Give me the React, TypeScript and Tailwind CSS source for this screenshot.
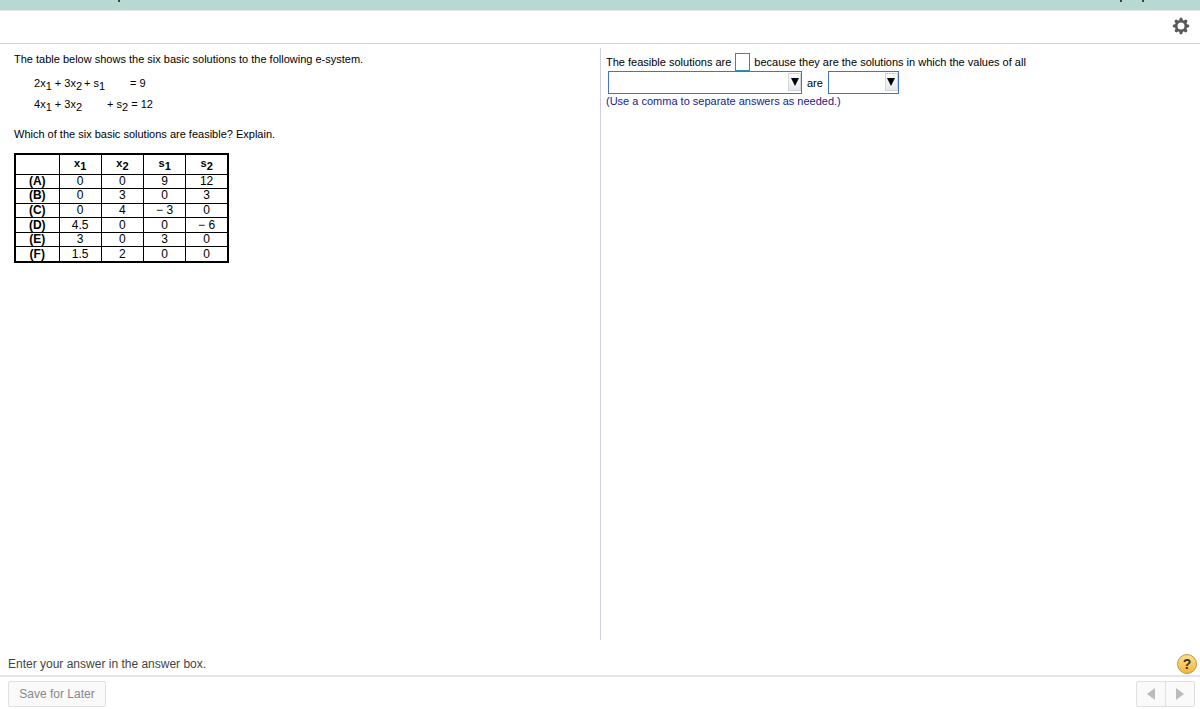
const columns = [
  { name: 'x', sub: '1' },
  { name: 'x', sub: '2' },
  { name: 's', sub: '1' },
  { name: 's', sub: '2' },
];

const solutions = [
  { label: '(A)', values: ['0', '0', '9', '12'] },
  { label: '(B)', values: ['0', '3', '0', '3'] },
  { label: '(C)', values: ['0', '4', '− 3', '0'] },
  { label: '(D)', values: ['4.5', '0', '0', '− 6'] },
  { label: '(E)', values: ['3', '0', '3', '0'] },
  { label: '(F)', values: ['1.5', '2', '0', '0'] },
];

const teeth = [0, 45, 90, 135, 180, 225, 270, 315];

function GearIcon() {
  return (
    <svg width="18" height="18" viewBox="0 0 18 18">
      <circle cx="9" cy="9" r="4.8" fill="none" stroke="#58595b" strokeWidth="2.6" />
      {teeth.map((angle) => (
        <path
          key={angle}
          d="M7 4L7.7 1.2Q9 0 10.3 1.2L11 4z"
          fill="#58595b"
          transform={`rotate(${angle} 9 9)`}
        />
      ))}
    </svg>
  );
}

function Var({ name, sub }: { name: string; sub: string }) {
  return (
    <>
      {name}
      <sub className="text-[11px] leading-none">{sub}</sub>
    </>
  );
}

function Dropdown({ label, className }: { label: string; className: string }) {
  return (
    <div className={`relative h-[23px] ${className}`}>
      <select
        aria-label={label}
        className="block h-full w-full appearance-none border border-[#4472c4] bg-white"
      />
      <span className="pointer-events-none absolute top-0.5 right-px flex h-[18px] w-[13px] justify-center border border-gray-300 bg-linear-to-b from-white to-gray-200 pt-1">
        <svg width="8" height="8" viewBox="0 0 8 8">
          <path d="M0 0h8L4 8z" fill="#000" />
        </svg>
      </span>
    </div>
  );
}

function Question() {
  return (
    <section className="w-1/2 px-3.5 pt-1">
      <p>The table below shows the six basic solutions to the following e-system.</p>
      <div className="mt-[7px] ml-5 grid auto-rows-[21px] grid-cols-[50px_23px_auto] justify-start leading-[21px]">
        <div className="whitespace-nowrap">
          2<Var name="x" sub="1" /> + 3<Var name="x" sub="2" />
        </div>
        <div className="whitespace-nowrap">
          + <Var name="s" sub="1" />
        </div>
        <div className="pl-[23px]">= 9</div>
        <div className="whitespace-nowrap">
          4<Var name="x" sub="1" /> + 3<Var name="x" sub="2" />
        </div>
        <div />
        <div>
          + <Var name="s" sub="2" /> = 12
        </div>
      </div>
      <p className="mt-3">Which of the six basic solutions are feasible? Explain.</p>
      <table className="mt-3 h-[110px] w-[215px] table-fixed border-collapse border-2 border-black text-center text-xs leading-[13px]">
        <thead>
          <tr className="h-5 text-[11px]">
            <th aria-label="Solution" className="w-11 border border-black" />
            {columns.map((column) => (
              <th key={column.name + column.sub} className="border border-black pb-0.5">
                <Var name={column.name} sub={column.sub} />
              </th>
            ))}
          </tr>
        </thead>
        <tbody>
          {solutions.map((row) => (
            <tr key={row.label}>
              <th className="border border-black">{row.label}</th>
              {row.values.map((value, i) => (
                <td key={i} className="border border-black">
                  {value}
                </td>
              ))}
            </tr>
          ))}
        </tbody>
      </table>
    </section>
  );
}

function Answer() {
  return (
    <section className="w-1/2 border-l border-[#d0d0e0] pt-[5px] pl-[5px]">
      <div className="flex h-[18px] items-center gap-1">
        <label htmlFor="feasible">The feasible solutions are</label>
        <input
          id="feasible"
          type="text"
          className="h-[18px] w-[15px] border border-[#2b8fa8] bg-white"
        />
        <span>because they are the solutions in which the values of all</span>
      </div>
      <div className="ml-0.5 flex items-center gap-[5px]">
        <Dropdown label="Values" className="w-[194px]" />
        <span>are</span>
        <Dropdown label="Condition" className="w-[71px]" />
      </div>
      <p className="text-[#1a1a8c]">(Use a comma to separate answers as needed.)</p>
    </section>
  );
}

export default function App() {
  return (
    <div className="flex min-h-screen flex-col bg-white font-['Liberation_Sans',Arial,sans-serif] text-xs leading-[14px] text-black">
      <div className="relative h-[11px] border-b border-gray-200 bg-[#b8d8d2]">
        <span className="absolute top-0 left-[118px] h-0.5 w-0.5 bg-[#4a3a3a]" />
        <span className="absolute top-0 right-[78px] h-0.5 w-0.5 bg-[#4a3a3a]" />
        <span className="absolute top-0 right-[56px] h-0.5 w-0.5 bg-[#4a3a3a]" />
      </div>
      <header className="flex h-[33px] items-center justify-end border-b border-[#d0d0dc] px-2.5 pb-0.5">
        <button type="button" aria-label="Settings">
          <GearIcon />
        </button>
      </header>

      <main className="flex flex-1 pt-1 text-[11px]">
        <Question />
        <Answer />
      </main>

      <div className="flex h-[35px] items-center justify-between pt-3 pr-[3px] pl-2 text-[#444]">
        <p>Enter your answer in the answer box.</p>
        <button
          type="button"
          className="flex size-5 items-center justify-center rounded-full border border-[#b89850] bg-linear-to-b from-[#fde08a] to-[#f5b535] text-sm font-bold text-[#333]"
        >
          ?
        </button>
      </div>
      <footer className="flex items-center justify-between border-t-2 border-[#e2e6ea] pt-1 pr-[5px] pb-0.5 pl-2">
        <button
          type="button"
          className="h-[26px] w-[98px] rounded-xs border border-[#e0e0e0] bg-[#fafafa] text-[#888]"
        >
          Save for Later
        </button>
        <div className="flex h-[26px] rounded-xs border border-[#e0e0e0] bg-[#fafafa]">
          <button type="button" aria-label="Previous" className="flex w-7 items-center justify-center">
            <svg width="8" height="12" viewBox="0 0 8 12">
              <path d="M8 0v12L0 6z" fill="#bbb" />
            </svg>
          </button>
          <button
            type="button"
            aria-label="Next"
            className="flex w-[29px] items-center justify-center border-l border-[#e0e0e0]"
          >
            <svg width="8" height="12" viewBox="0 0 8 12">
              <path d="M0 0v12l8-6z" fill="#bbb" />
            </svg>
          </button>
        </div>
      </footer>
    </div>
  );
}
